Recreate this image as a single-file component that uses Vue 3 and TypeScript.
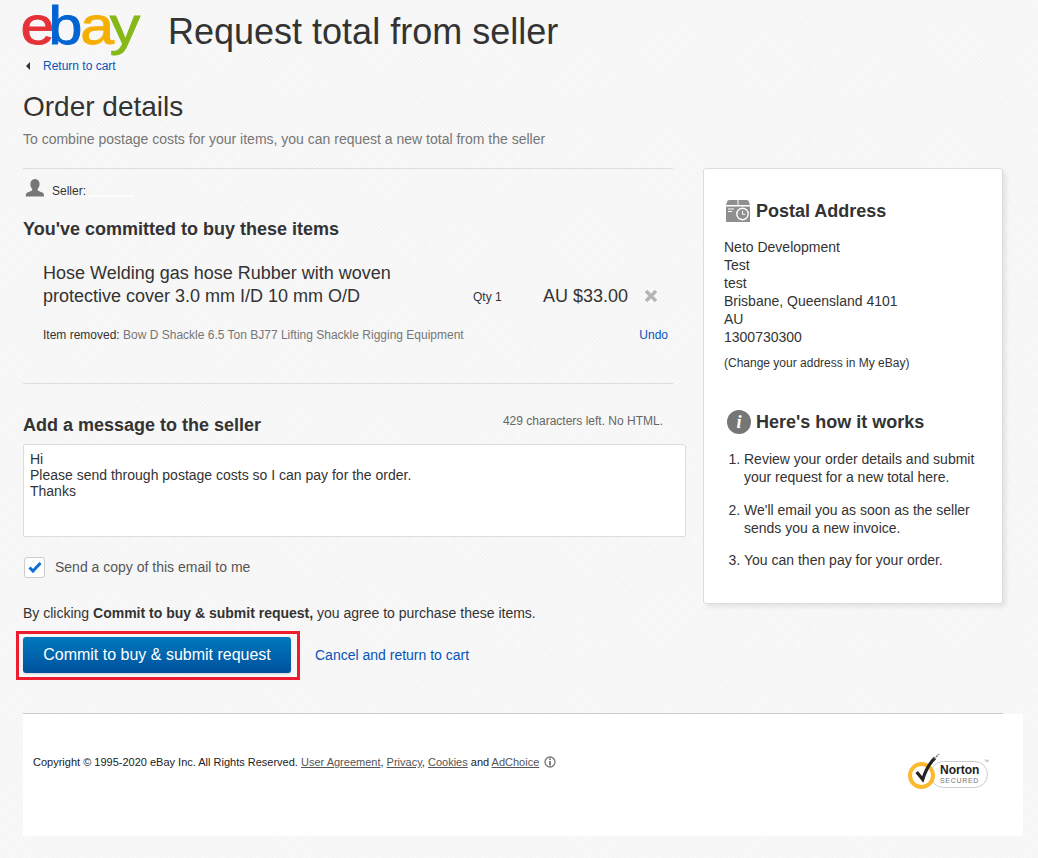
<script setup lang="ts">
const address: string[] = ['Neto Development', 'Test', 'test', 'Brisbane, Queensland 4101', 'AU', '1300730300']
const steps: string[] = [
  'Review your order details and submit your request for a new total here.',
  "We'll email you as soon as the seller sends you a new invoice.",
  'You can then pay for your order.',
]
const message = 'Hi\nPlease send through postage costs so I can pay for the order.\nThanks'
</script>

<template>
  <div class="page">
    <header class="head">
      <svg class="logo" width="148" height="57" viewBox="0 0 148 57" role="img" aria-label="eBay">
        <text y="44" transform="scale(1.15 1)"><tspan class="e" x="0.500">e</tspan><tspan class="b" x="24.800">b</tspan><tspan class="a" x="52.300">a</tspan><tspan class="y" x="78.100">y</tspan></text>
      </svg>
      <h1>Request total from seller</h1>
    </header>
    <a class="back"><span class="tri"></span>Return to cart</a>
    <h2 class="order">Order details</h2>
    <p class="sub">To combine postage costs for your items, you can request a new total from the seller</p>

    <div class="columns">
      <main class="left">
        <div class="seller">
          <svg class="user" width="20" height="20" viewBox="0 0 20 20"><path fill="#767676" d="M10 1c3 0 4.600 2.200 4.600 5 0 2-.8 3.600-1.900 4.700v1.500c0 .7 4.300 1.700 5.600 3 .6.6.7 2.100.7 3.300H.8c0-1.200.1-2.700.7-3.300 1.300-1.300 5.600-2.300 5.600-3v-1.500C6 9.600 5.400 8 5.400 6 5.400 3.200 7 1 10 1z"/></svg>
          <span>Seller:</span>
          <span class="smudge"></span>
        </div>
        <h3 class="committed">You've committed to buy these items</h3>
        <div class="item">
          <div class="title">Hose Welding gas hose Rubber with woven protective cover 3.0 mm I/D 10 mm O/D</div>
          <div class="qty">Qty 1</div>
          <div class="price">AU $33.00</div>
          <svg class="x" width="14" height="14" viewBox="0 0 14 14"><path d="M2 2l10 10M12 2L2 12" stroke="#b5b5b5" stroke-width="3.400"/></svg>
        </div>
        <div class="removed">
          <span><span class="rl">Item removed:</span> <span class="rn">Bow D Shackle 6.5 Ton BJ77 Lifting Shackle Rigging Equipment</span></span>
          <a>Undo</a>
        </div>
        <div class="msghead">
          <h3>Add a message to the seller</h3>
          <span class="left-count">429 characters left. No HTML.</span>
        </div>
        <textarea class="msg" :value="message" readonly></textarea>
        <label class="copy">
          <span class="box">
            <svg width="14" height="12" viewBox="0 0 14 12"><path d="M1.500 6.500L5 10l7.500-8" fill="none" stroke="#0f6fd6" stroke-width="3"/></svg>
          </span>
          Send a copy of this email to me
        </label>
        <p class="agree">By clicking <b>Commit to buy &amp; submit request,</b> you agree to purchase these items.</p>
        <div class="actions">
          <span class="hl"><button type="button">Commit to buy &amp; submit request</button></span>
          <a>Cancel and return to cart</a>
        </div>
      </main>

      <aside class="card">
        <div class="cardhead">
          <svg width="24" height="22" viewBox="0 0 24 22">
            <path fill="#8f8f8f" d="M3.500 0h8v5H0l1-3c.4-1.300 1-2 2.500-2zM12.500 0h8c1.500 0 2.100.7 2.500 2l1 3H12.500zM0 6.500h24V22H1c-.6 0-1-.4-1-1z"/>
            <circle cx="16.500" cy="14" r="6.400" fill="#fff"/>
            <circle cx="16.500" cy="14" r="5" fill="#8f8f8f"/>
            <path d="M16.500 10.800v3.500h2.700" fill="none" stroke="#fff" stroke-width="1"/>
            <path d="M2 9h6M2 11.500h4" stroke="#fff" stroke-width="1"/>
          </svg>
          <h3>Postal Address</h3>
        </div>
        <div class="addr">
          <div v-for="line in address" :key="line">{{ line }}</div>
        </div>
        <p class="change">(Change your address in My eBay)</p>
        <div class="cardhead how">
          <span class="info">i</span>
          <h3>Here's how it works</h3>
        </div>
        <ol>
          <li v-for="s in steps" :key="s">{{ s }}</li>
        </ol>
      </aside>
    </div>

    <footer class="foot">
      <p>Copyright © 1995-2020 eBay Inc. All Rights Reserved. <u>User Agreement</u>, <u>Privacy</u>, <u>Cookies</u> and <u>AdChoice</u>
        <svg class="ad" width="12" height="12" viewBox="0 0 12 12"><circle cx="6" cy="6" r="5" fill="none" stroke="#767676" stroke-width="1.300"/><path d="M6 5v4.500" stroke="#767676" stroke-width="1.800"/><circle cx="6" cy="3.300" r="1" fill="#767676"/></svg>
      </p>
      <div class="norton">
        <svg class="seal" width="34" height="38" viewBox="0 0 34 38">
          <circle cx="15.500" cy="23.500" r="11.500" fill="#fff" stroke="#fdb92e" stroke-width="4"/>
          <path d="M10.700 20l6 7.500c2.500-8 6-15.500 12.300-21.500" fill="none" stroke="#222" stroke-width="3.200"/>
          <path d="M28 7l5-5" stroke="#777" stroke-width="1.500" stroke-dasharray="2 1"/>
        </svg>
        <div class="pill"><span class="nn">Norton</span><span class="ns">SECURED</span><span class="tm">™</span></div>
      </div>
    </footer>
  </div>
</template>

<style>
html, body { margin: 0; background: #f5f5f5; }
</style>

<style scoped>
.page {
  width: 1038px;
  height: 858px;
  box-sizing: border-box;
  padding-left: 23px;
  overflow: hidden;
  font-family: "Liberation Sans", Arial, sans-serif;
  color: #333;
  background-color: #f5f5f5;
  background-image: repeating-linear-gradient(45deg, rgba(255,255,255,.28) 0 1px, transparent 1px 3px), repeating-linear-gradient(-45deg, rgba(255,255,255,.28) 0 1px, transparent 1px 3px);
}
h1, h2, h3, p { margin: 0; font-weight: normal; }
a { color: #0654ba; }
.head { display: flex; align-items: flex-start; height: 57px; }
.logo { flex: none; margin-left: -3px; }
.logo text { font-family: "Liberation Sans", Arial, sans-serif; font-size: 53px; stroke-width: .9px; }
.e { fill: #e53238; stroke: #e53238; }
.b { fill: #0064d2; stroke: #0064d2; }
.a { fill: #f5af02; stroke: #f5af02; }
.y { fill: #86b817; stroke: #86b817; }
h1 { font-size: 36px; line-height: 41px; margin-top: 11px; }
.back { display: flex; align-items: center; font-size: 12px; line-height: 14px; margin-top: 2px; }
.tri { width: 0; height: 0; border: 4px solid transparent; border-right: 4px solid #333; border-left: 0; margin: 0 13px 0 3px; }
.order { font-size: 28px; line-height: 32px; margin-top: 18px; }
.sub { font-size: 14px; line-height: 16px; color: #767676; margin-top: 8px; }
.columns { display: flex; gap: 30px; margin-top: 21px; }
.left { width: 650px; flex: none; border-top: 1px solid #ddd; }
.seller { display: flex; align-items: center; gap: 7px; font-size: 12px; padding: 12px 0 0 2px; height: 20px; }
.user { margin-bottom: 6px; }
.smudge { width: 46px; height: 2px; margin: 9px 0 0 -5px; background: #fff; opacity: .7; }
.committed, .msghead h3 { font-size: 18px; font-weight: bold; line-height: 21px; }
.committed { margin-top: 18px; }
.item { display: flex; align-items: flex-end; padding: 0 0 0 20px; margin-top: 22px; height: 46px; }
.title { width: 420px; font-size: 18px; line-height: 23px; flex: none; }
.qty { width: 80px; font-size: 12px; line-height: 23px; margin-bottom: -1px; flex: none; padding-left: 10px; box-sizing: border-box; }
.price { font-size: 18px; line-height: 23px; width: 86px; flex: none; }
.x { margin: 0 0 5px 15px; }
.removed {
  display: flex; justify-content: space-between; align-items: center;
  padding: 0 5px 41px 20px; margin-top: 20px; font-size: 12px; line-height: 14px;
  border-bottom: 1px solid #ddd;
}
.rn { color: #767676; }
.msghead { display: flex; justify-content: space-between; align-items: flex-start; margin-top: 31px; padding-right: 10px; }
.left-count { font-size: 12px; line-height: 14px; color: #666; margin-top: -1px; }
.msg {
  display: block; box-sizing: border-box; width: 663px; height: 93px;
  margin-top: 8px; padding: 6px 6px; resize: none; border: 1px solid #ddd; border-radius: 2px;
  font: 14px/16px "Liberation Sans", Arial, sans-serif; color: #333; background: #fff; outline: none;
}
.copy { display: flex; align-items: center; gap: 10px; font-size: 14px; margin-top: 19px; height: 22px; color: #555; }
.box {
  width: 21px; height: 21px; box-sizing: border-box; margin-left: 1px; border: 1px solid #ccc; border-radius: 3px; background: #fff;
  display: flex; align-items: center; justify-content: center;
}
.agree { font-size: 14px; line-height: 16px; margin-top: 27px; }
.agree b { font-weight: bold; }
.actions { display: flex; align-items: center; margin-top: 16px; }
.hl { display: block; position: relative; line-height: 0; margin-right: 24px; box-shadow: 0 1px 2px rgba(0,0,0,.15); border-radius: 3px; }
.hl::after { content: ""; position: absolute; inset: -6px -9px -7px -7px; border: 3px solid #ed1c2e; pointer-events: none; }
button {
  width: 268px; height: 36px; border: 0; border-radius: 3px; color: #fff; padding: 0;
  font: 16px "Liberation Sans", Arial, sans-serif;
  background: linear-gradient(#0079bc, #00519e);
}
.actions a { font-size: 14px; }
.card {
  width: 300px; height: 436px; box-sizing: border-box; flex: none; background: #fff; border: 1px solid #ddd; border-radius: 3px;
  box-shadow: 3px 3px 4px rgba(0,0,0,.08);
  padding: 31px 20px 0;
}
.cardhead { display: flex; align-items: center; gap: 6px; padding-left: 2px; }
.cardhead h3 { font-size: 18px; font-weight: bold; line-height: 21px; }
.addr { font-size: 14px; line-height: 18px; margin-top: 16px; }
.change { font-size: 12px; line-height: 14px; margin-top: 10px; }
.how { margin-top: 40px; gap: 5px; padding-left: 3px; }
.info {
  width: 24px; height: 24px; border-radius: 50%; background: #767676; color: #fff;
  font: italic bold 18px/24px "Liberation Serif", serif; text-align: center;
}
ol { margin: 16px 0 0; padding: 0 0 0 20px; font-size: 14px; line-height: 18px; }
li { margin-bottom: 14.500px; padding-right: 6px; }
.foot {
  width: 1000px; height: 122px; box-sizing: border-box; margin-top: 41px; background: #fff; position: relative;
  display: flex; justify-content: space-between; padding: 41px 35px 0 10px;
}
.foot::before { content: ""; position: absolute; left: 0; top: -1px; width: 980px; height: 1px; background: #ccc; }
.foot p { font-size: 11px; line-height: 14px; color: #222; }
.foot u { color: #555; }
.ad { vertical-align: -2px; margin-left: 5px; }
.norton { display: flex; align-items: flex-start; margin-top: -3px; }
.seal { z-index: 1; position: relative; }
.pill {
  position: relative;
  width: 58px; height: 27px; margin-left: -10px; margin-top: 9px; border: 1px solid #ccc; border-radius: 14px; padding-left: 9px; box-sizing: border-box;
  display: flex; flex-direction: column; justify-content: center;
}
.nn { font-size: 12px; font-weight: bold; line-height: 12px; color: #222; }
.ns { font-size: 7px; line-height: 9px; color: #777; letter-spacing: .7px; }
.tm { position: absolute; right: -2px; top: -4px; font-size: 5px; line-height: 6px; color: #888; }
</style>
